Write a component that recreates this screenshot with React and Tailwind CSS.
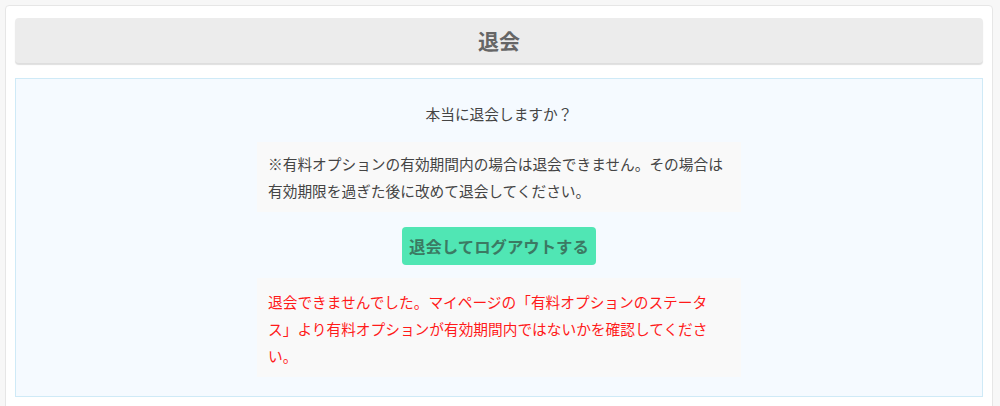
import React from 'react';

const font = { fontFamily: '"Noto Sans CJK JP", "Noto Sans", sans-serif' };

export default function App() {
  return (
    <div style={font} className="min-h-screen bg-[#f7f7f7] pt-[5px] pl-[5px] pr-[7px] [text-spacing-trim:space-all]">
      <div className="bg-white border border-[#e6e6e6] rounded-[4px] px-[9px] pt-[12px] pb-[20px]">
        {/* Title */}
        <div className="h-[45px] rounded-[4px] bg-[#ececec] shadow-[0_2px_1px_rgba(0,0,0,0.13)] flex items-center justify-center">
          <h2 className="text-[21px] font-bold text-[#666] leading-none">退会</h2>
        </div>

        {/* Body */}
        <div className="mt-[15px] border border-[#cfeaf7] bg-[#f5faff] pt-[21px] pb-[19px] flex flex-col items-center text-[14.7px] leading-[27px] text-[#444]">
          <p>本当に退会しますか？</p>

          <div className="mt-[15px] w-[484px] bg-[#f9f9f9] px-[11px] py-[8px]">
            <p>※有料オプションの有効期間内の場合は退会できません。その場合は有効期限を過ぎた後に改めて退会してください。</p>
          </div>

          <button className="mt-[15px] h-[38px] px-[7px] rounded-[4px] bg-[#50e6b4] text-[16.4px] font-bold text-[#3b7a63]">
            退会してログアウトする
          </button>

          <div className="mt-[13px] w-[484px] bg-[#f9f9f9] px-[11px] pt-[10px] pb-[8px]">
            <p className="text-[#ff1a1a]">
              退会できませんでした。マイページの「有料オプションのステータス」より有料オプションが有効期間内ではないかを確認してください。
            </p>
          </div>
        </div>
      </div>
    </div>
  );
}
